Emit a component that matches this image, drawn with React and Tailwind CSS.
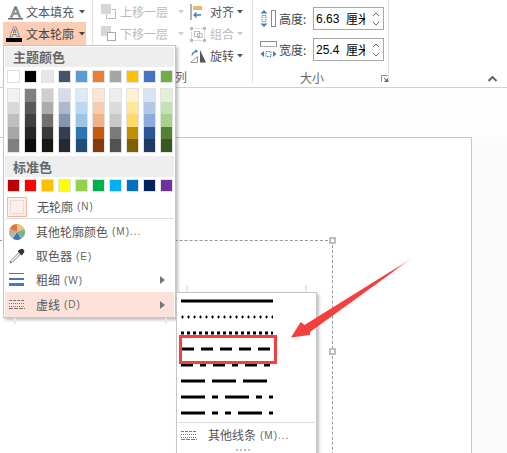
import React from 'react';

const themeTop = ['bg-[#ffffff]', 'bg-[#000000]', 'bg-[#e7e6e6]', 'bg-[#44546a]', 'bg-[#5b9bd5]', 'bg-[#ed7d31]', 'bg-[#a5a5a5]', 'bg-[#ffc000]', 'bg-[#4472c4]', 'bg-[#70ad47]'];

const themeShades = [
  ['bg-[#f2f2f2]', 'bg-[#d9d9d9]', 'bg-[#bfbfbf]', 'bg-[#a6a6a6]', 'bg-[#808080]'],
  ['bg-[#7f7f7f]', 'bg-[#595959]', 'bg-[#404040]', 'bg-[#262626]', 'bg-[#0d0d0d]'],
  ['bg-[#d0cece]', 'bg-[#aeabab]', 'bg-[#757070]', 'bg-[#3b3838]', 'bg-[#171616]'],
  ['bg-[#d6dce5]', 'bg-[#adb9ca]', 'bg-[#8497b0]', 'bg-[#333f50]', 'bg-[#222a35]'],
  ['bg-[#deebf7]', 'bg-[#bdd7ee]', 'bg-[#9dc3e6]', 'bg-[#2e75b6]', 'bg-[#1f4e79]'],
  ['bg-[#fbe5d6]', 'bg-[#f8cbad]', 'bg-[#f4b183]', 'bg-[#c55a11]', 'bg-[#843c0c]'],
  ['bg-[#ededed]', 'bg-[#dbdbdb]', 'bg-[#c9c9c9]', 'bg-[#7b7b7b]', 'bg-[#525252]'],
  ['bg-[#fff2cc]', 'bg-[#ffe699]', 'bg-[#ffd966]', 'bg-[#bf9000]', 'bg-[#7f6000]'],
  ['bg-[#dae3f3]', 'bg-[#b4c7e7]', 'bg-[#8faadc]', 'bg-[#2f5597]', 'bg-[#203864]'],
  ['bg-[#e2f0d9]', 'bg-[#c5e0b4]', 'bg-[#a9d18e]', 'bg-[#548235]', 'bg-[#385723]'],
];

const standard = ['bg-[#c00000]', 'bg-[#ff0000]', 'bg-[#ffc000]', 'bg-[#ffff00]', 'bg-[#92d050]', 'bg-[#00b050]', 'bg-[#00b0f0]', 'bg-[#0070c0]', 'bg-[#002060]', 'bg-[#7030a0]'];

// on/off patterns of the dash list, in px
const dashRows = [
  { dash: null, x: 0 },
  { plus: true },
  { dash: '3 3', x: 0 },
  { dash: '12 7', x: 1 },
  { dash: '12 7 6 7', x: 0 },
  { dash: '24 7', x: 0 },
  { dash: '24 7 6 7', x: 0 },
  { dash: '24 7 6 7 6 7', x: 0 },
];

function Caret({ className = 'text-[#555]' }) {
  return (
    <svg width="6" height="4" viewBox="0 0 6 4" className={className}>
      <path d="M0 0h6L3 3.5z" fill="currentColor" />
    </svg>
  );
}

function FillIcon() {
  return (
    <svg width="17" height="20" viewBox="0 0 17 20">
      <text x="8.5" y="14.5" textAnchor="middle" fontSize="15" fontFamily="Liberation Sans" fill="#fff" stroke="#666" strokeWidth="0.8">A</text>
      <rect x="1" y="16" width="15" height="1.5" fill="#666" />
    </svg>
  );
}

function OutlineIcon() {
  return (
    <svg width="17" height="22" viewBox="0 0 17 22">
      <text x="8.5" y="14" textAnchor="middle" fontSize="14" fontWeight="bold" fontFamily="Liberation Sans" fill="#fff" stroke="#555" strokeWidth="0.7">A</text>
      <rect x="0" y="15" width="16" height="4" fill="#000" />
    </svg>
  );
}

function LayerIcon({ down }) {
  return (
    <svg width="19" height="15" viewBox="0 0 19 15">
      <rect x="0" y="0" width="10" height="10" fill="#d9d5d9" />
      {down
        ? <rect x="6.5" y="6.5" width="8" height="8" fill="#fff" stroke="#aaa" />
        : <path d="M10.5 5.5h4v9h-9v-4" fill="none" stroke="#bbb" />}
    </svg>
  );
}

function AlignIcon() {
  return (
    <svg width="13" height="16" viewBox="0 0 13 16">
      <rect x="0.5" y="0" width="1" height="16" fill="#666" />
      <rect x="3" y="2" width="9" height="4" fill="#e6b96f" />
      <path d="M11 11H4M6.5 8.5L4 11l2.5 2.5" fill="none" stroke="#3f7cb8" strokeWidth="1.3" />
    </svg>
  );
}

function GroupIcon() {
  return (
    <svg width="16" height="15" viewBox="0 0 16 15">
      <rect x="1.5" y="1.5" width="13" height="12" fill="none" stroke="#ccc" strokeDasharray="2 1" />
      <rect x="0" y="0" width="3" height="3" fill="#bbb" />
      <rect x="13" y="0" width="3" height="3" fill="#bbb" />
      <rect x="0" y="12" width="3" height="3" fill="#bbb" />
      <rect x="13" y="12" width="3" height="3" fill="#bbb" />
      <rect x="4.5" y="4.5" width="5" height="5" fill="none" stroke="#bbb" />
      <rect x="7.5" y="6.5" width="4.5" height="4" fill="none" stroke="#bbb" />
    </svg>
  );
}

function RotateIcon() {
  return (
    <svg width="17" height="14" viewBox="0 0 17 14">
      <path d="M0.5 13.5L7.5 7.5v6z" fill="#fff" stroke="#999" />
      <path d="M10 1l6 12.5h-6z" fill="#555" />
      <path d="M2 6.5C2.5 4 4 2.5 6.5 2.2" fill="none" stroke="#3f7cb8" strokeWidth="1.2" />
      <path d="M5.5 0l2.5 2.2L5.5 4z" fill="#3f7cb8" />
    </svg>
  );
}

function HeightIcon() {
  return (
    <svg width="17" height="17" viewBox="0 0 17 17">
      <rect x="11.5" y="0.5" width="4" height="16" fill="none" stroke="#888" />
      <path d="M0.5 3.5l3.5-3.5 3.5 3.5zM0.5 13.5l3.5 3.5 3.5-3.5z" fill="#3f7cb8" />
      <rect x="2" y="5.5" width="4" height="6" fill="none" stroke="#3f7cb8" strokeDasharray="1.5 1" />
    </svg>
  );
}

function WidthIcon() {
  return (
    <svg width="17" height="17" viewBox="0 0 17 17">
      <path d="M0.5 5.5v-5h16v5" fill="none" stroke="#888" />
      <path d="M0.5 5.5h16" fill="none" stroke="#888" strokeDasharray="2 1" />
      <path d="M4 10l-3.5 3L4 16zM13 10l3.5 3-3.5 3z" fill="#3f7cb8" />
      <rect x="6" y="10.5" width="5" height="5" fill="none" stroke="#3f7cb8" strokeDasharray="1.5 1" />
    </svg>
  );
}

function Launcher() {
  return (
    <svg width="7" height="7" viewBox="0 0 7 7">
      <path d="M6.5 0.5h-6v6" fill="none" stroke="#888" />
      <path d="M3 3l3.5 3.5M3.5 7H7V3.5z" stroke="#666" fill="#666" />
    </svg>
  );
}

function PieIcon() {
  return (
    <svg width="16" height="16" viewBox="0 0 16 16">
      <path d="M8 8L8 0A8 8 0 0 1 15.4 5z" fill="#e8c48b" />
      <path d="M8 8L15.4 5A8 8 0 0 1 13 14.2z" fill="#7fb08a" />
      <path d="M8 8L12.5 14.5A8 8 0 0 1 3.5 14.5z" fill="#3f78b5" />
      <path d="M8 8L3 14.2A8 8 0 0 1 0.6 5z" fill="#b9b2a8" />
      <path d="M8 8L0.6 5A8 8 0 0 1 8 0z" fill="#e07b3c" />
    </svg>
  );
}

function DropperIcon() {
  return (
    <svg width="16" height="16" viewBox="0 0 16 16">
      <path d="M9.5 2.5l4 4" stroke="#444" strokeWidth="2.5" />
      <path d="M11 1.5a2 2 0 0 1 3.5 3.5L12.5 7L9 3.5z" fill="#333" />
      <path d="M9.5 5L2 12.5 1 15l2.5-1L11 6.5" fill="#fff" stroke="#777" />
    </svg>
  );
}

function WeightIcon() {
  return (
    <svg width="15" height="14" viewBox="0 0 15 14">
      <rect y="0" width="15" height="1" fill="#4a7ab0" />
      <rect y="5" width="15" height="2" fill="#4a7ab0" />
      <rect y="10" width="15" height="3" fill="#4a7ab0" />
    </svg>
  );
}

function DashIcon() {
  return (
    <svg width="16" height="9" viewBox="0 0 16 9">
      <path d="M0 0.5h16" stroke="#777" strokeDasharray="3 1" />
      <path d="M0 3.5h16" stroke="#777" strokeDasharray="1 1" />
      <path d="M0 6.5h16" stroke="#777" strokeDasharray="1 1" />
      <path d="M0 8.5h16" stroke="#777" strokeDasharray="4 1" />
    </svg>
  );
}

function Arrow() {
  return (
    <svg width="6" height="8" viewBox="0 0 6 8">
      <path d="M0 0l5 4-5 4z" fill="#777" />
    </svg>
  );
}

function MenuRow({ icon, label, hint, submenu, active, tall }) {
  return (
    <div className={`flex items-center ${tall ? 'h-[25px]' : 'h-[24px]'} ${active ? 'bg-[#fde2da]' : ''}`}>
      <span className="flex w-[31px] shrink-0 justify-start pl-[4px]">{icon}</span>
      <span className="text-[12px] text-[#555]">{label}</span>
      <span className="ml-[4px] font-['Liberation_Sans'] text-[10px] tracking-[1px] text-[#666]">{hint}</span>
      {submenu && <span className="ml-auto mr-[8px] flex"><Arrow /></span>}
    </div>
  );
}

function DashLine({ row }) {
  return (
    <div className="flex h-[16px] items-center">
      <svg width="92" height="4" viewBox="0 0 92 4">
        {row.plus ? (
          <>
            <line x1="0" x2="92" y1="2" y2="2" stroke="#000" strokeWidth="1" strokeDasharray="3 3" />
            <line x1="1" x2="92" y1="2" y2="2" stroke="#000" strokeWidth="3" strokeDasharray="1 5" />
          </>
        ) : (
          <line x1={row.x} x2="92" y1="2" y2="2" stroke="#000" strokeWidth="3" strokeDasharray={row.dash || undefined} />
        )}
      </svg>
    </div>
  );
}

function Handle({ className }) {
  return <div className={`absolute h-[7px] w-[7px] rounded-[1px] border-2 border-[#bdbdbd] bg-white ${className}`} />;
}

function SizeRow({ icon, label, value }) {
  return (
    <div className="flex h-[23px] items-center">
      <span className="flex w-[19px] shrink-0 justify-start">{icon}</span>
      <span className="w-[34px] shrink-0 text-[12px] text-[#444]">{label}</span>
      <div className="flex h-[23px] w-[71px] items-center overflow-hidden border border-[#a8a8a8] bg-white pl-[2px] text-black">
        <span className="w-[30px] shrink-0 font-['Liberation_Sans'] text-[12px]">{value}</span>
        <span className="w-[19px] shrink-0 overflow-hidden whitespace-nowrap text-[12px]">厘米</span>
        <div className="ml-auto mr-[4px] flex flex-col gap-[6px]">
          <svg width="6" height="3" viewBox="0 0 6 3"><path d="M0 3l3-3 3 3" fill="none" stroke="#666" /></svg>
          <svg width="6" height="3" viewBox="0 0 6 3"><path d="M0 0l3 3 3-3" fill="none" stroke="#666" /></svg>
        </div>
      </div>
    </div>
  );
}

function ArrangeItem({ icon, label, disabled }) {
  return (
    <div className="flex h-[22px] items-center">
      <span className="flex w-[20px] shrink-0">{icon}</span>
      <span className={`text-[12px] ${disabled ? 'text-[#bbb]' : 'text-[#555]'}`}>{label}</span>
      <span className="ml-[3px] flex"><Caret className={disabled ? 'text-[#ccc]' : 'text-[#555]'} /></span>
    </div>
  );
}

export default function App() {
  return (
    <div className="relative h-[453px] w-[507px] overflow-hidden bg-white font-['Noto_Sans_CJK_SC','Liberation_Sans',sans-serif]">
      {/* Ribbon */}
      <div className="flex h-[88px] border-b border-[#d2d2d2] bg-white">
        <div className="h-[83px] w-[93px] shrink-0 border-r border-[#e0e0e0] pl-[3px] pt-[1px]">
          <div className="flex h-[21px] items-center pl-[4px]">
            <FillIcon />
            <span className="ml-[2px] text-[12px] text-[#555]">文本填充</span>
            <span className="ml-[5px] flex"><Caret /></span>
          </div>
          <div className="flex h-[23px] w-[83px] items-center bg-[#fccdb5] pl-[3px]">
            <OutlineIcon />
            <span className="ml-[3px] text-[12px] text-[#444]">文本轮廓</span>
            <span className="ml-[5px] flex"><Caret className="text-[#444]" /></span>
          </div>
        </div>

        <div className="flex h-[83px] w-[160px] shrink-0 flex-col border-r border-[#e0e0e0]">
          <div className="flex flex-1 pl-[8px] pt-[1px]">
            <div className="w-[89px] shrink-0">
              <div className="flex h-[21px] items-center">
                <LayerIcon />
                <span className="text-[12px] text-[#bbb]">上移一层</span>
                <span className="ml-[10px] flex"><Caret className="text-[#ccc]" /></span>
              </div>
              <div className="flex h-[23px] items-center">
                <LayerIcon down />
                <span className="text-[12px] text-[#bbb]">下移一层</span>
                <span className="ml-[10px] flex"><Caret className="text-[#ccc]" /></span>
              </div>
            </div>
            <div>
              <ArrangeItem icon={<AlignIcon />} label="对齐" />
              <ArrangeItem icon={<GroupIcon />} label="组合" disabled />
              <ArrangeItem icon={<RotateIcon />} label="旋转" />
            </div>
          </div>
          <div className="-mb-[2px] h-[16px] pl-[70px] text-[12px] leading-[16px] text-[#666]">排列</div>
        </div>

        <div className="flex h-[83px] w-[136px] shrink-0 flex-col border-r border-[#e0e0e0] pl-[7px] pt-[7px]">
          <div className="flex flex-col gap-[8px]">
            <SizeRow icon={<HeightIcon />} label="高度:" value="6.63" />
            <SizeRow icon={<WidthIcon />} label="宽度:" value="25.4" />
          </div>
          <div className="-mb-[2px] mt-auto flex h-[14px] items-center">
            <span className="ml-[40px] text-[12px] text-[#666]">大小</span>
            <span className="ml-[57px] flex"><Launcher /></span>
          </div>
        </div>

        <div className="flex h-[83px] flex-1 items-end justify-end pb-[1px] pr-[10px]">
          <svg width="9" height="6" viewBox="0 0 9 6"><path d="M0.5 5L4.5 1l4 4" fill="none" stroke="#666" strokeWidth="2" /></svg>
        </div>
      </div>

      {/* Slide area */}
      <div className="flex h-[365px] flex-col">
        <div className="h-[49px] bg-[#fefefe]" />
        <div className="flex flex-1">
          <div className="flex-1 border-r border-t border-[#c8c8c8] bg-white" />
          <div className="w-[35px] bg-[#fbfbfb]" />
        </div>
      </div>

      {/* Selected text box on the slide */}
      <div className="absolute left-[-6px] top-[240px] h-[240px] w-[339px] border-r border-t border-dashed border-[#999]" />
      <Handle className="left-[329px] top-[237px]" />
      <Handle className="left-[329px] top-[348px]" />

      {/* Outline menu */}
      <div className="absolute left-[3px] top-[45px] h-[273px] w-[173px] border border-[#c6c6c6] bg-white pt-[1px] shadow-[2px_2px_3px_rgba(0,0,0,0.25)]">
        <div className="mx-[1px] flex h-[20px] items-center bg-[#eeeeee] pl-[8px] text-[13px] font-bold text-[#666]">主题颜色</div>
        <div className="mt-[3px] flex gap-[4px] pl-[3px]">
          {themeTop.map((c, i) => (
            <div key={i} className={`h-[13px] w-[13px] border border-[#e2e2e2] ${c}`} />
          ))}
        </div>
        <div className="mt-[5px] flex gap-[4px] pl-[3px]">
          {themeShades.map((col, i) => (
            <div key={i} className="flex h-[65px] w-[13px] flex-col border border-[#e2e2e2]">
              {col.map((c, j) => <div key={j} className={`flex-1 ${c}`} />)}
            </div>
          ))}
        </div>
        <div className="mx-[1px] mt-[3px] flex h-[21px] items-center bg-[#eeeeee] pl-[8px] text-[13px] font-bold text-[#666]">标准色</div>
        <div className="mt-[2px] flex gap-[4px] pl-[3px]">
          {standard.map((c, i) => (
            <div key={i} className={`h-[13px] w-[13px] border border-[#e2e2e2] ${c}`} />
          ))}
        </div>
        <div className="mt-[4px] flex h-[21px] items-center pl-[3px]">
          <div className="flex h-[20px] w-[20px] items-center justify-center border border-[#f5b79a] bg-[#fdf0ea]">
            <div className="h-[14px] w-[14px] border border-[#e4dedb]" />
          </div>
          <span className="ml-[10px] text-[12px] text-[#555]">无轮廓</span>
          <span className="ml-[4px] font-['Liberation_Sans'] text-[10px] tracking-[1px] text-[#666]">(N)</span>
        </div>
        <div className="mx-[1px] mt-[1px] h-[1px] bg-[#dddddd]" />
        <div className="mx-[1px] flex flex-col">
          <MenuRow icon={<PieIcon />} label="其他轮廓颜色" hint="(M)..." tall />
          <MenuRow icon={<DropperIcon />} label="取色器" hint="(E)" />
          <MenuRow icon={<WeightIcon />} label="粗细" hint="(W)" submenu />
          <MenuRow icon={<DashIcon />} label="虚线" hint="(D)" submenu active tall />
        </div>
        <div className="absolute left-[10px] top-[272px] h-[6px] w-[2px] bg-[#e8e8e8]" />
        <div className="absolute left-[161px] top-[272px] h-[6px] w-[2px] bg-[#e8e8e8]" />
      </div>

      {/* Dash submenu */}
      <div className="absolute left-[176px] top-[292px] h-[170px] w-[141px] border border-[#c6c6c6] bg-white shadow-[2px_2px_3px_rgba(0,0,0,0.25)]">
        <div className="pl-[4px]">
          {dashRows.map((row, i) => <DashLine key={i} row={row} />)}
        </div>
        <div className="mx-[1px] mt-[1px] h-[1px] bg-[#dddddd]" />
        <div className="flex h-[24px] items-center pl-[4px]">
          <DashIcon />
          <span className="ml-[11px] text-[12px] text-[#555]">其他线条</span>
          <span className="ml-[4px] font-['Liberation_Sans'] text-[10px] tracking-[1px] text-[#666]">(M)...</span>
        </div>
        <div className="ml-[59px] mt-[2px] flex gap-[2px]">
          {[0, 1, 2, 3].map((i) => <div key={i} className="h-[2px] w-[2px] bg-[#b4bfd0]" />)}
        </div>
      </div>
      <div className="absolute left-[186px] top-[285px] h-[7px] w-[2px] bg-[#e8e8e8]" />
      <div className="absolute left-[305px] top-[285px] h-[7px] w-[2px] bg-[#e8e8e8]" />

      {/* Red annotation */}
      <div className="absolute left-[179px] top-[335px] h-[29px] w-[98px] border-[3px] border-[#f54040]" />
      <svg className="absolute left-[285px] top-[250px]" width="135" height="95" viewBox="285 250 135 95">
        <defs>
          <linearGradient id="tail" x1="300" y1="330" x2="413" y2="258" gradientUnits="userSpaceOnUse">
            <stop offset="0.8" stopColor="#f43f3f" />
            <stop offset="1" stopColor="#f43f3f" stopOpacity="0.2" />
          </linearGradient>
        </defs>
        <path d="M291 337.5L300.7 322L304.5 325L413 257.5L310 332L310 335Z" fill="url(#tail)" />
      </svg>
    </div>
  );
}
